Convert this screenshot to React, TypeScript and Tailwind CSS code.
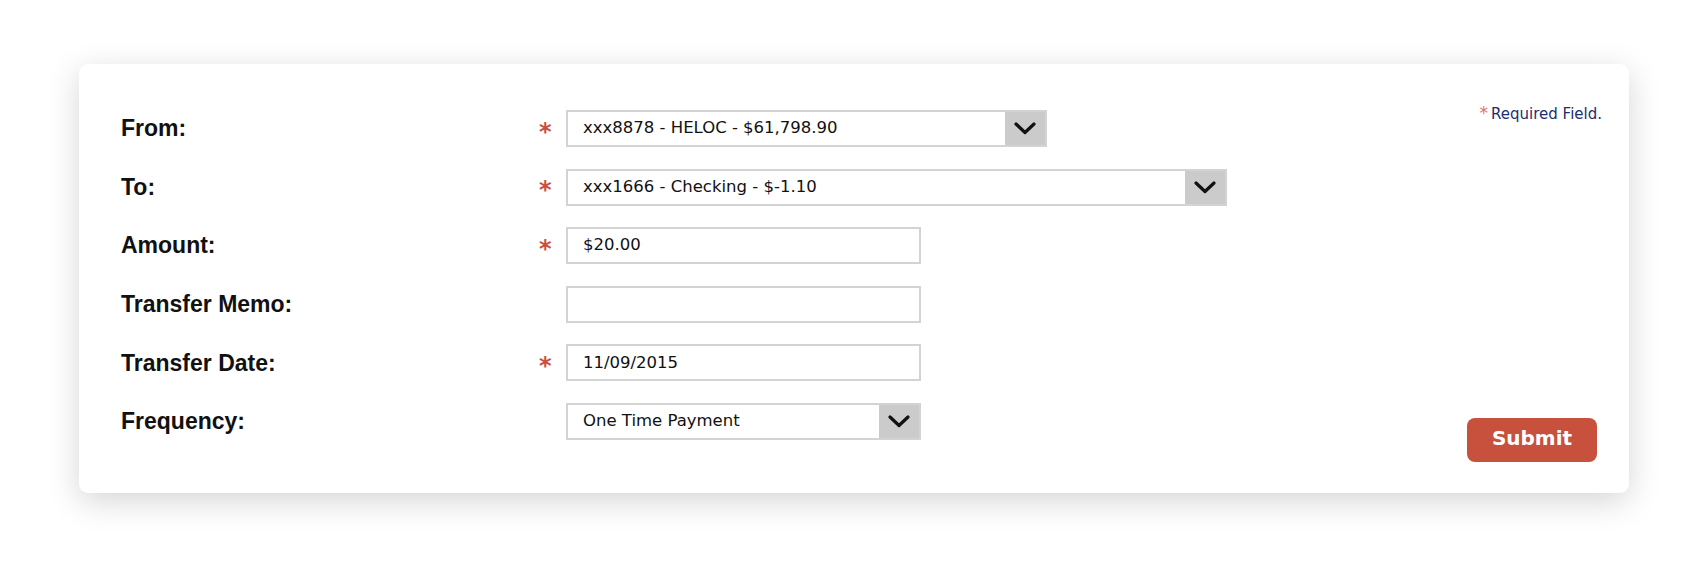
import React from "react";

const Chevron = () => (
  <svg width="22" height="13" viewBox="0 0 22 13" fill="none">
    <polyline points="2,2 11,10.5 20,2" stroke="#111" strokeWidth="3.2" strokeLinecap="round" strokeLinejoin="round" />
  </svg>
);

const Star = ({ show }: { show: boolean }) => (
  <div className="w-[25px] shrink-0 flex items-center">
    {show && (
      <span className="text-[#c9503d] text-[24px] font-bold leading-none pt-[6px] -ml-[2px]" style={{ fontFamily: "'DejaVu Sans', sans-serif" }}>
        *
      </span>
    )}
  </div>
);

const Select = ({ value, w }: { value: string; w: string }) => (
  <div className={`${w} h-[37px] border-2 border-[#d3d3d3] flex items-stretch bg-white`}>
    <div className="flex-1 flex items-center pl-[15px] text-[16.5px] text-[#111]" style={{ fontFamily: "'DejaVu Sans', sans-serif" }}>
      {value}
    </div>
    <div className="w-[40px] bg-[#cbcbcb] flex items-center justify-center">
      <Chevron />
    </div>
  </div>
);

const Input = ({ value }: { value: string }) => (
  <div className="w-[355px] h-[37px] border-2 border-[#d3d3d3] flex items-center pl-[15px] text-[16.5px] text-[#111] bg-white" style={{ fontFamily: "'DejaVu Sans', sans-serif" }}>
    {value}
  </div>
);

const Row = ({ label, req, children }: { label: string; req: boolean; children: React.ReactNode }) => (
  <div className="flex items-center h-[37px]">
    <div className="w-[420px] shrink-0 text-[23px] font-bold text-[#111]" style={{ fontFamily: "'Liberation Sans', Arial, sans-serif" }}>
      {label}
    </div>
    <Star show={req} />
    {children}
  </div>
);

export default function App() {
  return (
    <div className="bg-white w-[1703px] h-[566px] pt-[64px] pl-[79px]">
      <div className="w-[1550px] bg-white rounded-[9px] shadow-[0_8px_32px_rgba(0,0,0,0.17)] flex pt-[46px] pb-[31px] pl-[42px] pr-[27px]">
        <div className="flex flex-col gap-y-[21.6px] flex-1 pb-[22px]">
          <Row label="From:" req>
            <Select value="xxx8878 - HELOC - $61,798.90" w="w-[481px]" />
          </Row>
          <Row label="To:" req>
            <Select value="xxx1666 - Checking - $-1.10" w="w-[661px]" />
          </Row>
          <Row label="Amount:" req>
            <Input value="$20.00" />
          </Row>
          <Row label="Transfer Memo:" req={false}>
            <Input value="" />
          </Row>
          <Row label="Transfer Date:" req>
            <Input value="11/09/2015" />
          </Row>
          <Row label="Frequency:" req={false}>
            <Select value="One Time Payment" w="w-[355px]" />
          </Row>
        </div>
        <div className="flex flex-col items-end justify-between">
          <div className="mt-[-6px] leading-[18px] text-[15px] text-[#1b2f6e] whitespace-nowrap" style={{ fontFamily: "'DejaVu Sans', sans-serif" }}>
            <span className="text-[#e0705f] text-[17px] mr-[3px]">*</span>Required Field.
          </div>
          <button className="mr-[5px] w-[130px] h-[44px] rounded-[8px] bg-[#c8513d] text-white text-[20px] font-bold leading-none pb-[3px]" style={{ fontFamily: "'DejaVu Sans', sans-serif" }}>
            Submit
          </button>
        </div>
      </div>
    </div>
  );
}
